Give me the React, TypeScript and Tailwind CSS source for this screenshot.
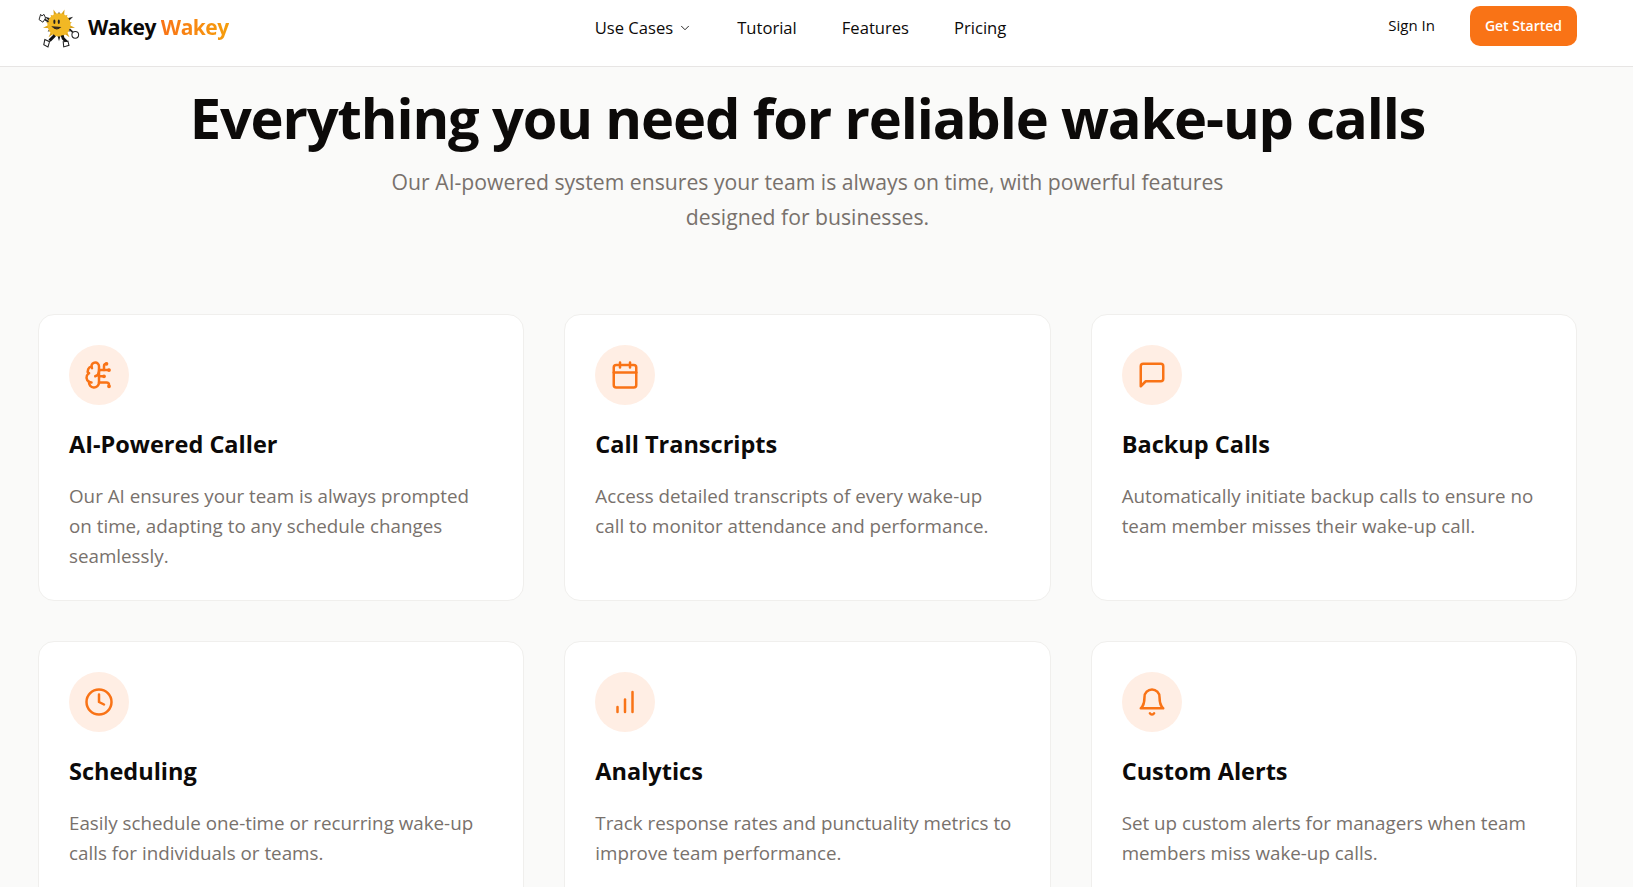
import React from "react";
import { BrainCircuit, Calendar, Clock, ChevronDown } from "lucide-react";

type IconProps = { size?: number; strokeWidth?: number };

function Base({ size = 30, strokeWidth = 2, children }: IconProps & { children: React.ReactNode }) {
  return (
    <svg width={size} height={size} viewBox="0 0 24 24" fill="none" stroke="currentColor" strokeWidth={strokeWidth} strokeLinecap="round" strokeLinejoin="round">
      {children}
    </svg>
  );
}
const Message = (p: IconProps) => (
  <Base {...p}>
    <path d="M21 15a2 2 0 0 1-2 2H7l-4 4V5a2 2 0 0 1 2-2h14a2 2 0 0 1 2 2z" />
  </Base>
);
const Bars = (p: IconProps) => (
  <Base {...p}>
    <path d="M18 20V4" />
    <path d="M12 20V10" />
    <path d="M6 20v-4" />
  </Base>
);
const OldBell = (p: IconProps) => (
  <Base {...p}>
    <path d="M6 8a6 6 0 0 1 12 0c0 7 3 9 3 9H3s3-2 3-9" />
    <path d="M10.3 21a1.94 1.94 0 0 0 3.4 0" />
  </Base>
);

function Sun() {
  const rays = Array.from({ length: 18 }, (_, i) => (i * 360) / 18);
  return (
    <svg width="42" height="42" viewBox="0 0 40 40" className="shrink-0">
      {rays.map((r, i) => (
        <polygon key={r} points={i % 2 ? "20,1.5 18.2,8 21.8,8" : "20,4.5 18.2,9 21.8,9"} fill={i % 3 === 0 ? "#222" : "#d9a21c"} transform={`rotate(${r} 20 17)`} />
      ))}
      <circle cx="20" cy="17" r="11" fill="#f2b824" />
      <ellipse cx="15.6" cy="14" rx="1" ry="2.1" fill="#222" />
      <ellipse cx="19.8" cy="14" rx="1" ry="2.1" fill="#222" />
      <path d="M14 19q3.5 3.5 7 0.5z" stroke="#222" strokeWidth="1" fill="#7a3a10" />
      <path d="M10 14L6.5 12" stroke="#222" strokeWidth="1.6" />
      <path d="M1 12l1.5-5 1.2 1.5 2-1.5 1.5 3.5-2.5 4z" fill="#fff" stroke="#222" strokeWidth="0.9" />
      <path d="M30 21l3 3" stroke="#222" strokeWidth="1.6" />
      <circle cx="35.5" cy="26.5" r="3.2" fill="#fff" stroke="#222" strokeWidth="1" />
      <path d="M16 27l-5 5M23 27l1 3 3 3" stroke="#111" strokeWidth="2.8" fill="none" />
      <path d="M6.5 31l4.5 2-1.5 5-4-2z" fill="#fff" stroke="#222" strokeWidth="1" />
      <path d="M24 33l4.5-0.5 1 4-5 1.5z" fill="#fff" stroke="#222" strokeWidth="1" />
    </svg>
  );
}

const features = [
  { icon: BrainCircuit, title: "AI-Powered Caller", text: "Our AI ensures your team is always prompted on time, adapting to any schedule changes seamlessly." },
  { icon: Calendar, title: "Call Transcripts", text: "Access detailed transcripts of every wake-up call to monitor attendance and performance." },
  { icon: Message, title: "Backup Calls", text: "Automatically initiate backup calls to ensure no team member misses their wake-up call." },
  { icon: Clock, title: "Scheduling", text: "Easily schedule one-time or recurring wake-up calls for individuals or teams." },
  { icon: Bars, title: "Analytics", text: "Track response rates and punctuality metrics to improve team performance." },
  { icon: OldBell, title: "Custom Alerts", text: "Set up custom alerts for managers when team members miss wake-up calls." },
];

export default function App() {
  return (
    <div className="h-[887px] overflow-hidden bg-[#fafaf9] text-[#0c0a09] font-['Open_Sans','Noto_Sans',sans-serif]">
      <header className="h-[67px] bg-white border-b border-[#e7e5e4] pl-[38px] pr-[56px] pb-[11px] flex items-center justify-between">
        <div className="flex items-center gap-[8px] w-[400px]">
          <Sun />
          <span className="text-[21px] font-bold tracking-[-0.5px]">
            Wakey{" "}
            <span className="bg-gradient-to-r from-[#f97316] to-[#f59e0b] bg-clip-text text-transparent">Wakey</span>
          </span>
        </div>
        <nav className="flex items-center text-[16.6px] font-medium gap-[45px] mr-[14px] mt-[2px]">
          <span className="flex items-center gap-[5px]">
            Use Cases <ChevronDown size={14} strokeWidth={1.5} />
          </span>
          <span>Tutorial</span>
          <span>Features</span>
          <span>Pricing</span>
        </nav>
        <div className="flex items-center justify-end gap-[35px] w-[400px] -mt-[4px]">
          <span className="text-[15px] font-medium">Sign In</span>
          <span className="h-[40px] px-[15px] rounded-[10px] bg-[#f97316] text-white text-[14px] font-semibold flex items-center">
            Get Started
          </span>
        </div>
      </header>
      <main className="pl-[38px] pr-[56px]">
        <h1 className="text-center text-[56px] leading-[60px] font-bold tracking-[-1.13px] mt-[20px] whitespace-nowrap">
          Everything you need for reliable wake-up calls
        </h1>
        <p className="text-center text-[#78716c] text-[21.2px] leading-[35px] w-[880px] mx-auto mt-[17px]">
          Our AI-powered system ensures your team is always on time, with powerful features designed for businesses.
        </p>
        <div className="grid grid-cols-3 gap-[40px] mt-[80px]">
          {features.map((f) => {
            const I = f.icon;
            return (
              <div key={f.title} className="h-[287px] bg-white border border-[#f0efed] rounded-[16px] p-[30px]">
                <div className="w-[60px] h-[60px] rounded-full bg-[#ffeee4] flex items-center justify-center text-[#f97316]">
                  <I size={30} strokeWidth={2} />
                </div>
                <h3 className="text-[23.5px] leading-[32px] font-bold mt-[23px]">{f.title}</h3>
                <p className="text-[18.8px] leading-[30px] text-[#78716c] mt-[21px] max-w-[418px]">{f.text}</p>
              </div>
            );
          })}
        </div>
      </main>
    </div>
  );
}
